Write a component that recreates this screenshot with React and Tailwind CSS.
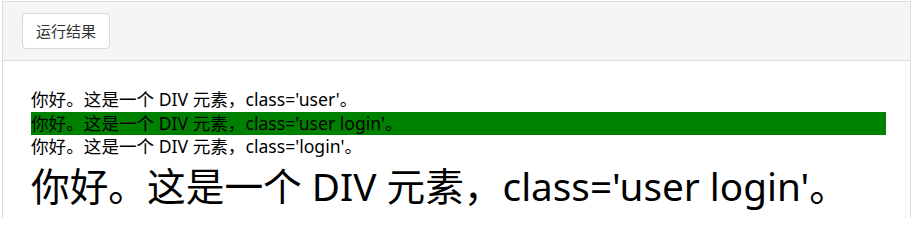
const lines = [
  { text: "你好。这是一个 DIV 元素，class='user'。", cls: '' },
  { text: "你好。这是一个 DIV 元素，class='user login'。", cls: 'bg-[#008000]' },
  { text: "你好。这是一个 DIV 元素，class='login'。", cls: '' },
];

const App = () => {
  return (
    <div className="w-[915px] h-[218px] overflow-hidden bg-white pl-[2px] pt-[1px] font-['Noto_Sans','Noto_Sans_CJK_SC',sans-serif]">
      <div className="w-[909px] h-[240px] border border-[#dcdcdc]">
        {/* toolbar */}
        <div className="h-[59px] bg-[#f5f5f5] border-b border-[#dedede] pl-[19px] pt-[11px]">
          <button className="h-[36px] px-[13px] bg-white border border-[#d9d9d9] rounded-[4px] text-[15px] text-[#333] leading-none">
            运行结果
          </button>
        </div>

        {/* result */}
        <div className="mr-[4px] h-full border-r border-[#eeeeee] pl-[28px] pr-[19px] pt-[27px] text-black">
          {lines.map((l, i) => (
            <div key={i} className={`text-[17.6px] leading-[23.5px] ${l.cls}`}>
              {l.text}
            </div>
          ))}
          <div className="text-[38.7px] leading-[50px] mt-[2px]">
            你好。这是一个 DIV 元素，class='user login'。
          </div>
        </div>
      </div>
    </div>
  );
};

export default App;
